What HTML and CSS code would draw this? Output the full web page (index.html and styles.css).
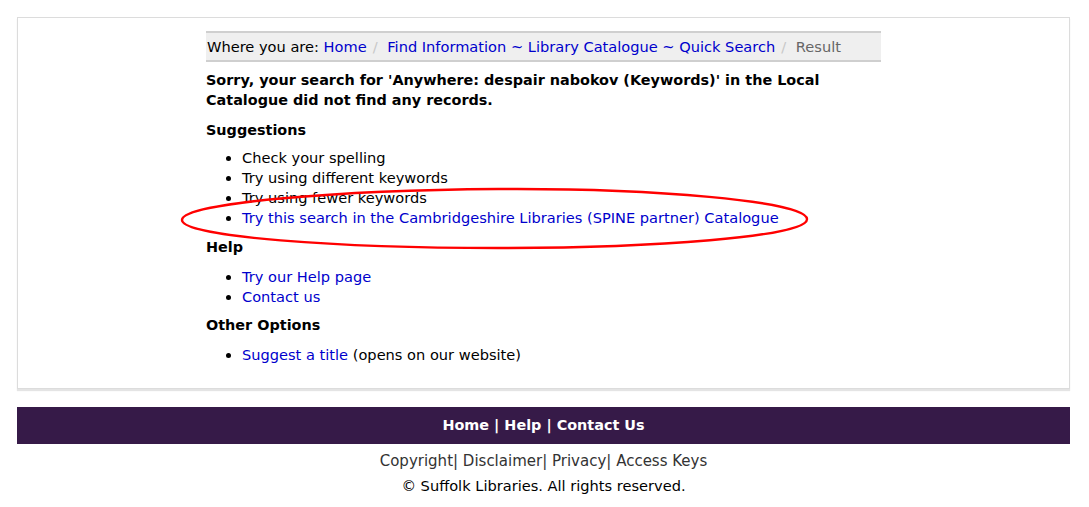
FILE: index.html
```html
<!DOCTYPE html>
<html lang="en">
<head>
<meta charset="utf-8">
<title>Search Result</title>
<link rel="stylesheet" href="styles.css">
</head>
<body>
<div class="page">
  <div class="panel">
    <div class="content">
      <div class="crumbs">Where you are: <a href="#">Home</a><span class="sep">/</span> <a href="#">Find Information ~ Library Catalogue ~ Quick Search</a><span class="sep">/</span> <span class="current">Result</span></div>
      <p class="sorry">Sorry, your search for 'Anywhere: despair nabokov (Keywords)' in the Local Catalogue did not find any records.</p>
      <h3>Suggestions</h3>
      <ul class="annotated">
        <li>Check your spelling</li>
        <li>Try using different keywords</li>
        <li>Try using fewer keywords</li>
        <li><a href="#">Try this search in the Cambridgeshire Libraries (SPINE partner) Catalogue</a></li>
        <svg class="circle" width="640" height="70" viewBox="0 0 640 70"><path d="M318 4 C 470 3, 626 16, 627 34 C 628 52, 470 63, 318 63 C 160 63, 2 52, 2 35 C 2 18, 160 5, 318 4 Z" fill="none" stroke="#f00" stroke-width="2.4"/></svg>
      </ul>
      <h3>Help</h3>
      <ul>
        <li><a href="#">Try our Help page</a></li>
        <li><a href="#">Contact us</a></li>
      </ul>
      <h3>Other Options</h3>
      <ul>
        <li><a href="#">Suggest a title</a> (opens on our website)</li>
      </ul>
    </div>
  </div>
  <div class="footbar"><a href="#">Home</a> | <a href="#">Help</a> | <a href="#">Contact Us</a></div>
  <div class="legal"><a href="#">Copyright</a>| <a href="#">Disclaimer</a>| <a href="#">Privacy</a>| <a href="#">Access Keys</a></div>
  <div class="copy">© Suffolk Libraries. All rights reserved.</div>
</div>
</body>
</html>
```
FILE: styles.css
```css
html, body { margin: 0; padding: 0; background: #fff; }
body {
  font-family: "DejaVu Sans", Verdana, sans-serif;
  font-size: 14.6px;
  line-height: 20px;
  color: #000;
}
a { color: #0000cc; text-decoration: none; }
.page { width: 1053px; margin: 0 0 0 17px; padding-top: 17px; }
.panel {
  border: 1px solid #dcdcdc;
  box-shadow: 0 2px 1px #e4e4e4;
  padding: 13px 0 23px;
}
.content { width: 675px; margin: 0 auto; }
.crumbs {
  background: #efefef;
  border-top: 2px solid #cfcfcf;
  border-bottom: 2px solid #cfcfcf;
  padding: 4px 1px 3px;
  height: 20px;
}
.crumbs .sep { color: #c8c8c8; margin: 0 5px 0 6px; }
.crumbs .current { color: #666; }
.sorry { font-weight: bold; font-size: 14.4px; margin: 8px 0 0; }
h3 { font-size: 14.4px; line-height: 20px; margin: 10px 0 0; font-weight: bold; }
ul { margin: 10px 0 0; padding-left: 36px; }
ul.annotated { margin-top: 8px; position: relative; }
ul + h3 { margin-top: 9px; }
ul + h3 + ul + h3 { margin-top: 8px; }
.circle { position: absolute; left: -26px; top: 37px; pointer-events: none; overflow: visible; }
.footbar {
  margin-top: 18px;
  background: #361a48;
  color: #fff;
  font-weight: bold;
  font-size: 14.4px;
  text-align: center;
  height: 37px;
  line-height: 37px;
}
.footbar a { color: #fff; }
.legal { text-align: center; color: #333; font-size: 15px; margin-top: 7px; line-height: 21px; }
.legal a { color: #333; }
.copy { text-align: center; color: #000; margin-top: 3px; line-height: 21px; }
```
